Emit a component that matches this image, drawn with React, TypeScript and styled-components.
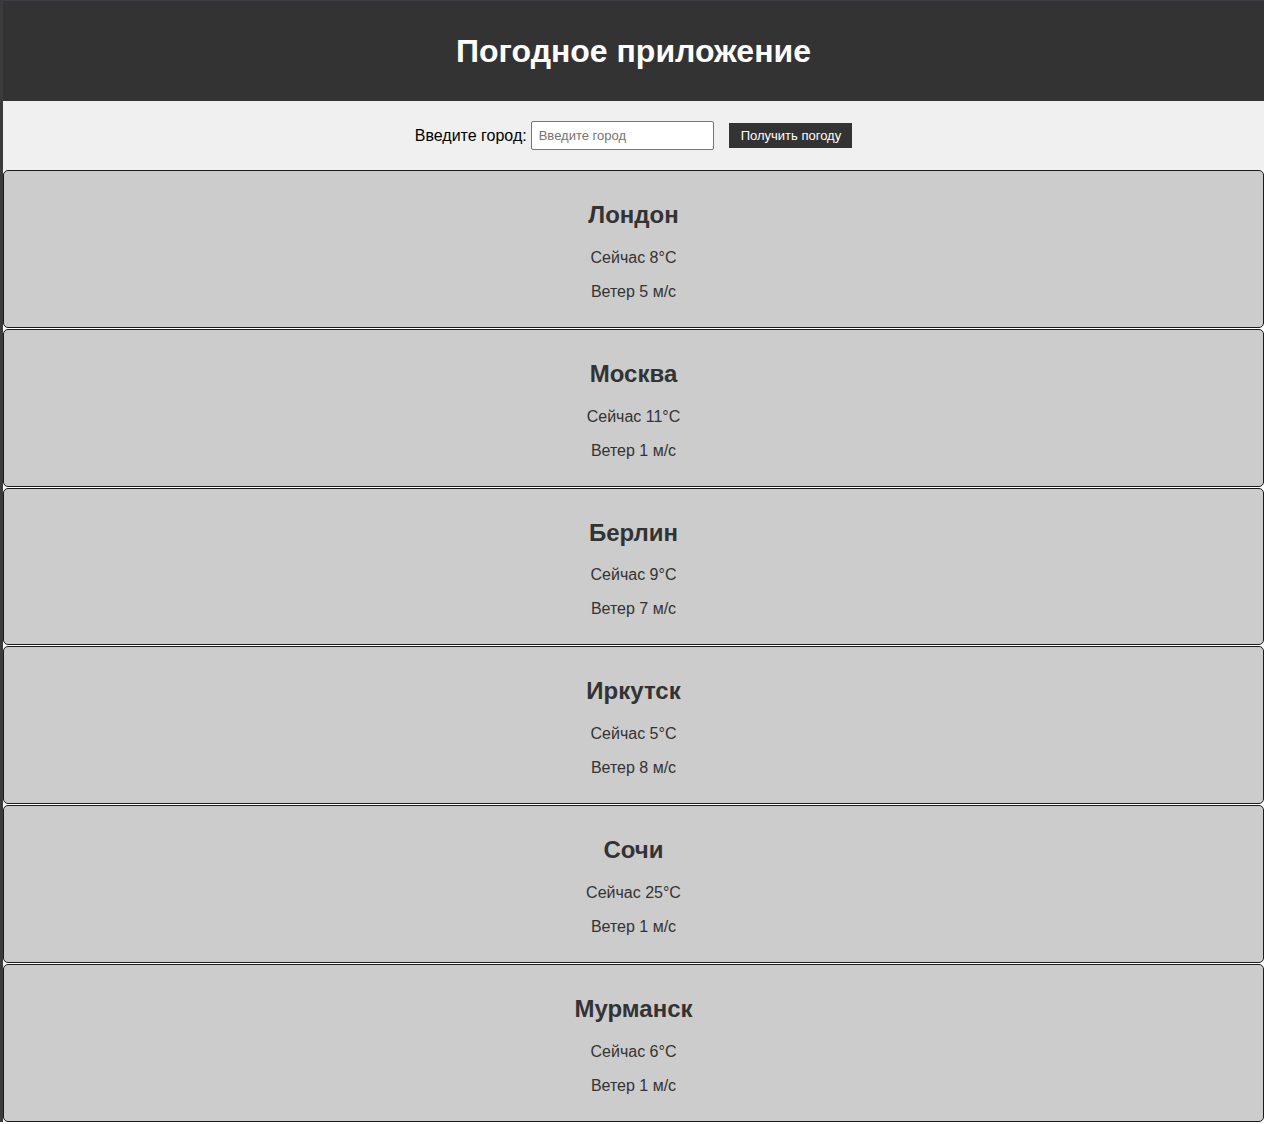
import React from "react";
import styled, { createGlobalStyle } from "styled-components";

const Global = createGlobalStyle`
  html, body { margin: 0; padding: 0; }
  body {
    font-family: "Liberation Sans", Arial, sans-serif;
    background: #ffffff;
    border-left: 3px solid #3b3b3d;
  }
`;

const Header = styled.header`
  height: 101px;
  background: #333333;
  display: flex;
  align-items: center;
  justify-content: center;
  border-top: 1px solid #3e3e44;
  box-sizing: border-box;
`;

const Title = styled.h1`
  margin: 0;
  color: #ffffff;
  font-size: 32px;
  font-weight: bold;
`;

const SearchBar = styled.div`
  background: #f0f0f0;
  padding: 20px;
  display: flex;
  justify-content: center;
  align-items: center;
`;

const Label = styled.label`
  font-size: 16px;
  color: #000;
  margin-right: 4px;
`;

const Input = styled.input`
  width: 183px;
  height: 29px;
  box-sizing: border-box;
  border: 1px solid #767676;
  border-radius: 2px;
  padding: 4px 7px;
  font-family: "Liberation Sans", Arial, sans-serif;
  font-size: 13px;
  background: #fff;
  &::placeholder { color: #757575; }
`;

const Button = styled.button`
  margin-left: 15px;
  background: #333333;
  color: #ffffff;
  border: none;
  border-radius: 0;
  height: 25px;
  padding: 0 11px 0 12px;
  font-family: "Liberation Sans", Arial, sans-serif;
  font-size: 13px;
  cursor: pointer;
`;

const List = styled.div`
  display: flex;
  flex-direction: column;
  gap: 1px;
`;

const Card = styled.div`
  background: #cccccc;
  border: 1px solid #1a1a1a;
  border-radius: 5px;
  padding: 10px;
  text-align: center;
  color: #333333;
`;

const City = styled.h2`
  font-size: 24px;
  font-weight: bold;
  margin: 19.92px 0;
  color: #333333;
`;

const Line = styled.p`
  font-size: 16px;
  margin: 16px 0;
  color: #333333;
`;

const data = [
  { city: "Лондон", t: 8, w: 5 },
  { city: "Москва", t: 11, w: 1 },
  { city: "Берлин", t: 9, w: 7 },
  { city: "Иркутск", t: 5, w: 8 },
  { city: "Сочи", t: 25, w: 1 },
  { city: "Мурманск", t: 6, w: 1 },
];

export default function App() {
  return (
    <>
      <Global />
      <Header>
        <Title>Погодное приложение</Title>
      </Header>
      <SearchBar>
        <Label htmlFor="city">Введите город:</Label>
        <Input id="city" placeholder="Введите город" />
        <Button>Получить погоду</Button>
      </SearchBar>
      <List>
        {data.map((d) => (
          <Card key={d.city}>
            <City>{d.city}</City>
            <Line>Сейчас {d.t}°C</Line>
            <Line>Ветер {d.w} м/с</Line>
          </Card>
        ))}
      </List>
    </>
  );
}
